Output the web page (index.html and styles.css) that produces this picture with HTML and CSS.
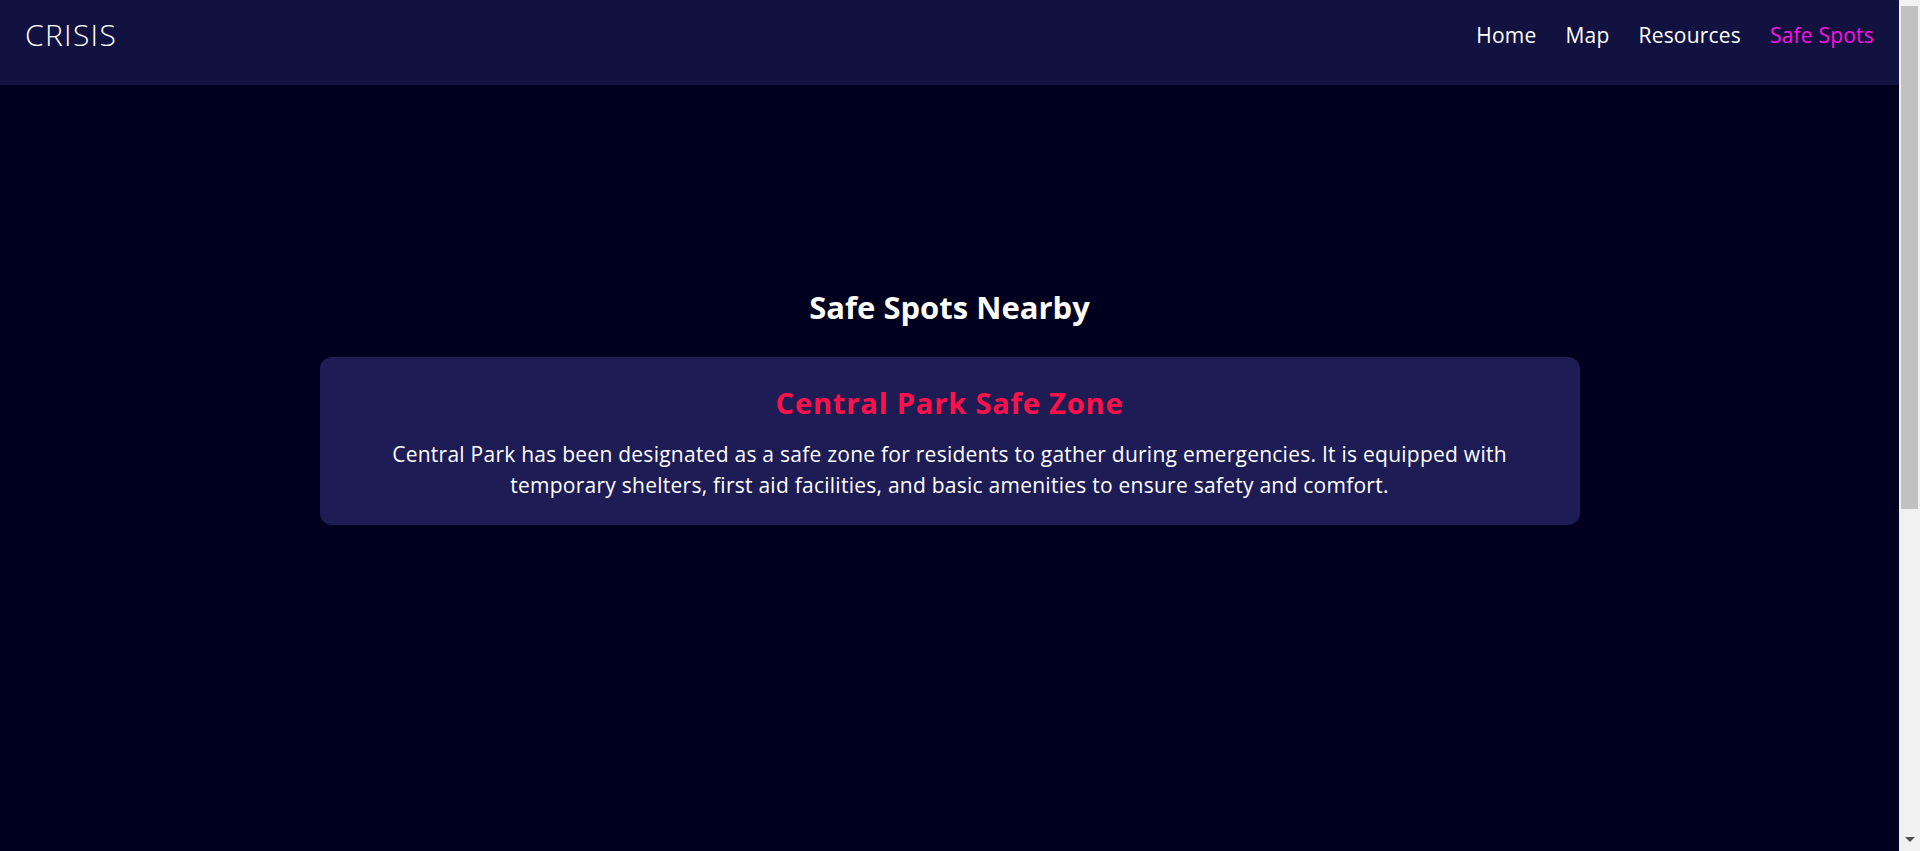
FILE: index.html
```html
<!DOCTYPE html>
<html lang="en">
<head>
<meta charset="utf-8">
<title>CRISIS - Safe Spots</title>
<link rel="stylesheet" href="styles.css">
</head>
<body>
<header class="site-header">
  <div class="logo">CRISIS</div>
  <nav class="nav">
    <a href="#" class="nav-link">Home</a>
    <a href="#" class="nav-link">Map</a>
    <a href="#" class="nav-link">Resources</a>
    <a href="#" class="nav-link active">Safe Spots</a>
  </nav>
</header>
<main class="main">
  <section class="safe-spots">
    <h2 class="section-title">Safe Spots Nearby</h2>
    <div class="spot-card">
      <h3 class="spot-title">Central Park Safe Zone</h3>
      <p class="spot-text">Central Park has been designated as a safe zone for residents to gather during emergencies. It is equipped with temporary shelters, first aid facilities, and basic amenities to ensure safety and comfort.</p>
    </div>
  </section>
</main>
<div class="fake-scrollbar" aria-hidden="true">
  <div class="scroll-thumb"></div>
  <div class="scroll-arrow"></div>
</div>
</body>
</html>
```

FILE: styles.css
```css
* {
  box-sizing: border-box;
}

html {
  background: #00001e;
}

body {
  margin: 0 21px 0 0;
  background: #00001e;
  color: #ffffff;
  font-family: "Open Sans", "Liberation Sans", sans-serif;
}

.site-header {
  height: 85px;
  background: #121240;
  display: flex;
  justify-content: space-between;
  align-items: flex-start;
  padding: 12px 25px 0 25px;
}

.logo {
  font-size: 30px;
  font-weight: 300;
  line-height: 45px;
  letter-spacing: 1.3px;
}

.nav {
  display: flex;
  gap: 29px;
  padding-top: 7px;
}

.nav-link {
  color: #ffffff;
  text-decoration: none;
  font-size: 21px;
  line-height: 32px;
  letter-spacing: 0.2px;
}

.nav-link.active {
  color: #ff10e0;
}

.main {
  padding-top: 204px;
}

.safe-spots {
  text-align: center;
}

.section-title {
  margin: 0 0 31px 0;
  font-size: 31px;
  font-weight: 700;
  line-height: 1.2;
}

.spot-card {
  width: 1260px;
  margin: 0 auto;
  background: #1e1c55;
  border-radius: 12px;
  padding: 29px 25px 24px;
}

.spot-title {
  margin: 0 0 18px 0;
  color: #ff1048;
  font-size: 29px;
  font-weight: 700;
  line-height: 1.2;
  letter-spacing: 0.85px;
}

.spot-text {
  margin: 0;
  font-size: 21px;
  line-height: 31px;
  letter-spacing: 0.25px;
}

.fake-scrollbar {
  position: fixed;
  top: 0;
  right: 0;
  width: 21px;
  height: 100vh;
  background: #f1f1f1;
  display: flex;
  flex-direction: column;
  align-items: center;
  padding: 6px 2px 9px;
}

.scroll-thumb {
  width: 17px;
  height: 503px;
  background: #c1c1c1;
}

.scroll-arrow {
  margin-top: auto;
  width: 0;
  height: 0;
  border-left: 5px solid transparent;
  border-right: 5px solid transparent;
  border-top: 5px solid #505050;
}
```
